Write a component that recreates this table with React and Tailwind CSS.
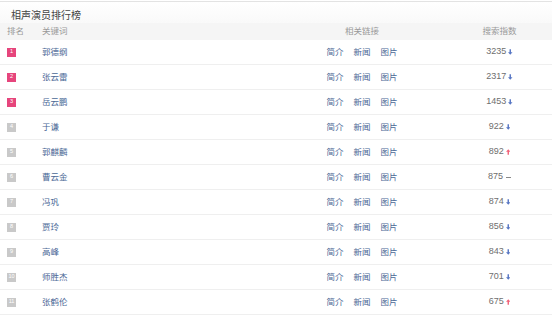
import React from 'react';

// 相声演员排行榜 — ranking table
const rows = [
  { rank: 1, name: '郭德纲', value: 3235, trend: 'down' },
  { rank: 2, name: '张云雷', value: 2317, trend: 'down' },
  { rank: 3, name: '岳云鹏', value: 1453, trend: 'down' },
  { rank: 4, name: '于谦', value: 922, trend: 'down' },
  { rank: 5, name: '郭麒麟', value: 892, trend: 'up' },
  { rank: 6, name: '曹云金', value: 875, trend: 'same' },
  { rank: 7, name: '冯巩', value: 874, trend: 'down' },
  { rank: 8, name: '贾玲', value: 856, trend: 'down' },
  { rank: 9, name: '高峰', value: 843, trend: 'down' },
  { rank: 10, name: '师胜杰', value: 701, trend: 'down' },
  { rank: 11, name: '张鹤伦', value: 675, trend: 'up' },
];

const Trend = ({ trend }) => {
  if (trend === 'same') {
    return <span className="inline-block w-[5px] h-px bg-[#888] ml-[3px]" aria-hidden="true" />;
  }
  const color = trend === 'up' ? '#f2637a' : '#5877c4';
  return (
    <svg viewBox="0 0 5 6" width="4.5" height="6" className="ml-[2px]" aria-hidden="true">
      {trend === 'up' ? (
        <path d="M2.5 0 L5 2.8 L3.3 2.8 L3.3 6 L1.7 6 L1.7 2.8 L0 2.8 Z" fill={color} />
      ) : (
        <path d="M2.5 6 L5 3.2 L3.3 3.2 L3.3 0 L1.7 0 L1.7 3.2 L0 3.2 Z" fill={color} />
      )}
    </svg>
  );
};

const cols = 'grid grid-cols-[42px_223px_194px_81px]';

export default function App() {
  return (
    <div
      className="w-[552px] mt-px border-t border-[#e3e3e3] bg-white text-[#555]"
      style={{ fontFamily: '"Liberation Sans", "Noto Sans CJK SC", sans-serif' }}
    >
      <div className="h-[21px] pt-[6px] pl-[11px] text-[10px] leading-[15px] text-[#444] bg-gradient-to-b from-white to-[#f9f9f9]">
        相声演员排行榜
      </div>
      <div className={`${cols} h-[17px] items-center bg-[#f5f5f5] text-[8.5px] text-[#999]`}>
        <div className="pl-[7px]">排名</div>
        <div>关键词</div>
        <div className="text-center">相关链接</div>
        <div className="text-center">搜索指数</div>
      </div>
      {rows.map((r) => (
        <div key={r.rank} className={`${cols} h-[25px] items-center border-b border-[#efefef] text-[8.5px]`}>
          <div className="pl-[7px]">
            <span
              className={`flex items-center justify-center w-[9px] h-[9px] text-[5.5px] leading-none text-white ${
                r.rank <= 3 ? 'bg-[#e6457c]' : 'bg-[#c9c9c9]'
              }`}
            >
              {r.rank}
            </span>
          </div>
          <div className="text-[#4a6795]">{r.name}</div>
          <div className="flex justify-center gap-[10px] text-[#4a6795]">
            <span>简介</span>
            <span>新闻</span>
            <span>图片</span>
          </div>
          <div className="flex items-center justify-center text-[9px] text-[#6e6e6e]">
            <span>{r.value}</span>
            <Trend trend={r.trend} />
          </div>
        </div>
      ))}
    </div>
  );
}
